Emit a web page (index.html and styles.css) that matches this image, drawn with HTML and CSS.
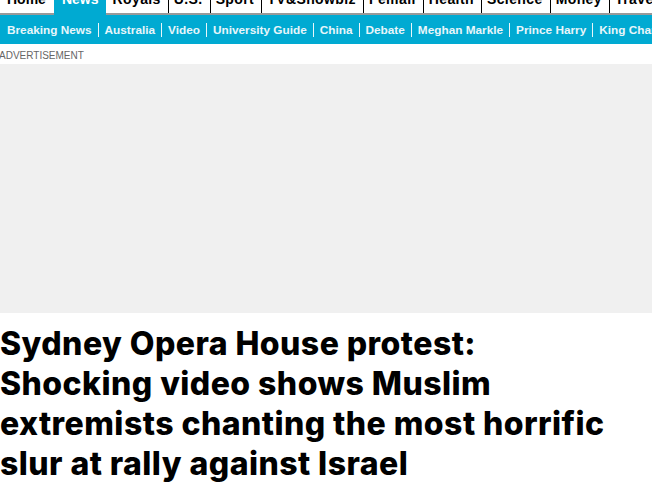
FILE: index.html
```html
<!DOCTYPE html>
<html>
<head>
<meta charset="utf-8">
<link rel="stylesheet" href="styles.css">
</head>
<body>
<div class="page">
  <nav class="topnav">
    <a class="tn first">Home</a>
    <a class="tn active">News</a>
    <a class="tn nosep">Royals</a>
    <a class="tn">U.S.</a>
    <a class="tn">Sport</a>
    <a class="tn">TV&amp;Showbiz</a>
    <a class="tn">Femail</a>
    <a class="tn">Health</a>
    <a class="tn">Science</a>
    <a class="tn">Money</a>
    <a class="tn">Travel</a>
  </nav>
  <nav class="subnav">
    <a class="sn first">Breaking News</a>
    <a class="sn">Australia</a>
    <a class="sn">Video</a>
    <a class="sn">University Guide</a>
    <a class="sn">China</a>
    <a class="sn">Debate</a>
    <a class="sn">Meghan Markle</a>
    <a class="sn">Prince Harry</a>
    <a class="sn">King Charles</a>
  </nav>
  <div class="ad-label">ADVERTISEMENT</div>
  <div class="ad-box"></div>
  <h1 class="headline">Sydney Opera House protest: Shocking video shows Muslim extremists chanting the most horrific slur at rally against Israel</h1>
</div>
</body>
</html>
```
FILE: styles.css
```css
html, body {
  margin: 0;
  padding: 0;
  background: #fff;
  overflow: hidden;
}
.page {
  margin-top: -14px;
  width: 652px;
}
.topnav {
  display: flex;
  white-space: nowrap;
  border-bottom: 2px solid #999;
  height: 27px;
}
.tn {
  font-family: "Liberation Sans", Arial, sans-serif;
  font-weight: bold;
  font-size: 14px;
  letter-spacing: 0.4px;
  color: #000;
  line-height: 27px;
  height: 27px;
  padding: 0 7px 0 6px;
  display: block;
  position: relative;
}
.tn::before {
  content: "";
  position: absolute;
  left: 0;
  top: 8px;
  bottom: 0;
  width: 1px;
  background: #000;
}
.tn.first { padding-left: 7px; letter-spacing: 0; }
.tn.first::before, .tn.active::before, .tn.nosep::before { display: none; }
.tn.active {
  background: #00aad2;
  color: #fff;
  height: 29px;
  padding: 0 8px;
  margin-left: 1px;
  letter-spacing: 0;
}
.subnav {
  display: flex;
  align-items: center;
  white-space: nowrap;
  height: 29px;
  background: #00aad2;
  overflow: hidden;
}
.sn {
  font-family: "Liberation Sans", Arial, sans-serif;
  font-weight: bold;
  font-size: 11.8px;
  color: #e8f6fa;
  line-height: 14px;
  padding: 0 6px;
  border-left: 1px solid #e8f6fa;
  display: block;
}
.sn.first {
  border-left: none;
  padding-left: 7px;
}
.ad-label {
  font-family: "Liberation Sans", Arial, sans-serif;
  font-size: 10px;
  line-height: 12px;
  color: #666;
  margin: 6px 0 0 -1px;
}
.ad-box {
  margin-top: 2px;
  height: 249px;
  background: #f0f0f0;
}
.headline {
  font-family: Inter, "Liberation Sans", sans-serif;
  font-weight: 800;
  font-size: 32px;
  letter-spacing: 0.45px;
  line-height: 40px;
  color: #000;
  margin: 11px 0 0 0;
  padding: 0 30px 0 0;
}
```
